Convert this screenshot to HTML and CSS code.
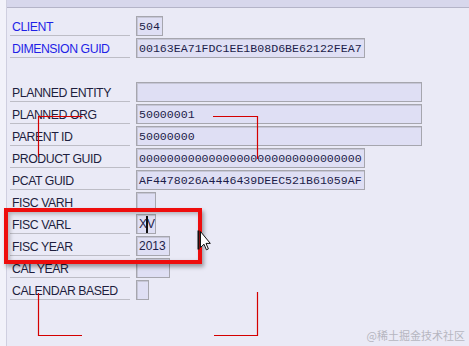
FILE: index.html
```html
<!DOCTYPE html>
<html lang="en">
<head>
    <meta charset="UTF-8">
    <title>Dimension Detail</title>
    <link rel="stylesheet" href="styles.css">
</head>
<body>

<div class="screen">
    <div class="side"></div>
    <div class="main">
        <div class="topbar"></div>
        <div class="form">
            <div class="row">
                <span class="label key">CLIENT</span>
                <span class="field mono w3">504</span>
            </div>
            <div class="row">
                <span class="label key">DIMENSION GUID</span>
                <span class="field mono wguid">00163EA71FDC1EE1B08D6BE62122FEA7</span>
            </div>
            <div class="row blank"></div>
            <div class="row">
                <span class="label">PLANNED ENTITY</span>
                <span class="field wlong"></span>
            </div>
            <div class="row">
                <span class="label">PLANNED ORG</span>
                <span class="field mono wlong">50000001</span>
            </div>
            <div class="row">
                <span class="label">PARENT ID</span>
                <span class="field mono wlong">50000000</span>
            </div>
            <div class="row">
                <span class="label">PRODUCT GUID</span>
                <span class="field mono wguid">00000000000000000000000000000000</span>
            </div>
            <div class="row">
                <span class="label">PCAT GUID</span>
                <span class="field mono wguid">AF4478026A4446439DEEC521B61059AF</span>
            </div>
            <div class="row">
                <span class="label">FISC VARH</span>
                <span class="field w2"></span>
            </div>
            <div class="row">
                <span class="label">FISC VARL</span>
                <span class="field w2">XV<i class="caret"></i></span>
            </div>
            <div class="row">
                <span class="label">FISC YEAR</span>
                <span class="field w4">2013</span>
            </div>
            <div class="row">
                <span class="label">CAL YEAR</span>
                <span class="field w4"></span>
            </div>
            <div class="row">
                <span class="label">CALENDAR BASED</span>
                <span class="field w1"></span>
            </div>
        </div>
    </div>

    <div class="highlight"></div>

    <svg class="marks" width="469" height="346" viewBox="0 0 469 346">
        <path d="M82.5 116.5H38.5V157M213 116.5H257.5V159M38.5 293V335.5H82M214 335.5H257.5V292" fill="none" stroke="#d40000" stroke-width="1.2"/>
    </svg>

    <svg class="pointer" width="14" height="22" viewBox="0 0 14 22">
        <rect x="0.5" y="0.5" width="2" height="19" fill="#111"/>
        <path d="M3.5 1.5V17.5L7 14.2L9.4 19.8L11.4 18.9L9 13.4H13.3Z" fill="#fff" stroke="#111" stroke-width="1"/>
    </svg>

    <div class="watermark">@稀土掘金技术社区</div>
</div>

</body>
</html>
```

FILE: styles.css
```css
body {
    margin: 0;
    font-family: "Liberation Sans", Arial, sans-serif;
}
.screen {
    position: relative;
    width: 469px;
    height: 346px;
    display: flex;
    background-color: #eaeaf6;
    overflow: hidden;
}
.side {
    width: 6px;
    background: #f2f2fa;
    border-right: 1px solid #cfcfe0;
}
.main {
    flex: 1;
}
.topbar {
    height: 7px;
    background: #d7d7ec;
    border-bottom: 1px solid #b4b4c8;
}
.form {
    padding: 8px 0 0 3px;
}
.row {
    display: flex;
    height: 20px;
    margin-bottom: 2px;
}
.label {
    box-sizing: border-box;
    width: 120px;
    height: 20px;
    margin-right: 6px;
    padding: 3px 0 0 2px;
    line-height: 16px;
    font-size: 12.3px;
    letter-spacing: -0.45px;
    color: #1e1e3e;
    border-bottom: 1px solid #bdbdc6;
    white-space: nowrap;
}
.label.key {
    color: #1f1fe6;
}
.field {
    position: relative;
    box-sizing: border-box;
    height: 20px;
    padding: 1px 2px 0;
    line-height: 17px;
    font-size: 12px;
    color: #1d1d4a;
    background: #dfdff4;
    border: 1px solid #a6a6ae;
    box-shadow: inset 1px 1px 0 #c6c6d6;
    white-space: nowrap;
    overflow: hidden;
}
.mono {
    font-family: "Liberation Mono", "Courier New", monospace;
    font-size: 11.6px;
}
.w1 { width: 13px; }
.w2 { width: 20px; }
.w3 { width: 27px; }
.w4 { width: 34px; }
.wguid { width: 229px; }
.wlong { width: 286px; }
.caret {
    position: absolute;
    left: 9px;
    top: 1px;
    width: 2px;
    height: 17px;
    background: #111;
}
.highlight {
    position: absolute;
    left: 4px;
    top: 208px;
    width: 190px;
    height: 48px;
    border: 4px solid #ee0d0d;
    box-shadow: 2px 3px 4px rgba(0, 0, 0, 0.35), inset 2px 2px 4px rgba(0, 0, 0, 0.25);
}
.marks {
    position: absolute;
    left: 0;
    top: 0;
}
.pointer {
    position: absolute;
    left: 197px;
    top: 230px;
}
.watermark {
    position: absolute;
    right: 4px;
    bottom: 3px;
    font-family: "Noto Sans CJK SC", sans-serif;
    font-size: 11px;
    color: #b6b6c0;
}
```
